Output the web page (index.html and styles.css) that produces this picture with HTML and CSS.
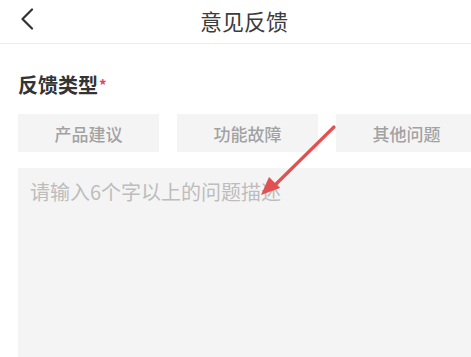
FILE: index.html
```html
<!DOCTYPE html>
<html lang="zh">
<head>
<meta charset="utf-8">
<link rel="stylesheet" href="styles.css">
</head>
<body>
<div class="page">
  <header class="topbar">
    <span class="back">
      <svg width="14" height="22" viewBox="0 0 14 22"><path d="M12 1.5 L2.5 11 L12 20.5" fill="none" stroke="#333" stroke-width="2.2" stroke-linecap="round" stroke-linejoin="round"/></svg>
    </span>
    <h1 class="title">意见反馈</h1>
  </header>
  <main class="content">
    <h2 class="label">反馈类型<span class="star">*</span></h2>
    <div class="types">
      <div class="type">产品建议</div>
      <div class="type">功能故障</div>
      <div class="type">其他问题</div>
    </div>
    <div class="desc">请输入6个字以上的问题描述</div>
  </main>
  <svg class="arrow" width="100" height="90" viewBox="0 0 100 90">
    <line x1="94" y1="11" x2="34" y2="70" stroke="#e05252" stroke-width="3.2" stroke-linecap="round"/>
    <polygon points="21,79 29,61 40,72" fill="#e05252"/>
  </svg>
</div>
</body>
</html>
```

FILE: styles.css
```css
html, body {
  margin: 0;
  padding: 0;
  background: #fff;
  overflow: hidden;
  width: 471px;
  height: 357px;
}
body {
  font-family: "Noto Sans CJK SC", "Noto Sans", sans-serif;
}
.page {
  position: relative;
  width: 471px;
  height: 357px;
  overflow: hidden;
}
.topbar {
  height: 43px;
  border-bottom: 1px solid #ececec;
  display: flex;
  align-items: flex-start;
  justify-content: center;
  position: relative;
}
.back {
  position: absolute;
  left: 20px;
  top: 8px;
  display: flex;
}
.title {
  margin: 9px 0 0 17px;
  font-size: 22px;
  font-weight: 400;
  color: #3c3c3c;
  line-height: 22px;
}
.content {
  padding: 27px 0 0 18px;
  width: 459px;
}
.label {
  margin: 0;
  font-size: 20px;
  font-weight: 700;
  color: #333;
  line-height: 28px;
  height: 28px;
}
.star {
  color: #d84a6a;
  font-size: 15px;
  vertical-align: top;
  margin-left: 1px;
}
.types {
  margin-top: 15px;
  display: grid;
  grid-template-columns: 141px 141px 141px;
  column-gap: 18px;
}
.type {
  height: 38px;
  background: #f4f4f4;
  color: #a2a2a2;
  font-size: 17px;
  font-weight: 500;
  display: flex;
  align-items: center;
  justify-content: center;
}
.desc {
  margin-top: 16px;
  width: 459px;
  height: 200px;
  background: #f4f4f4;
  color: #bdbdbd;
  font-size: 20px;
  line-height: 26px;
  padding: 11px 12px;
  box-sizing: border-box;
}
.arrow {
  position: absolute;
  left: 240px;
  top: 116px;
}
```
